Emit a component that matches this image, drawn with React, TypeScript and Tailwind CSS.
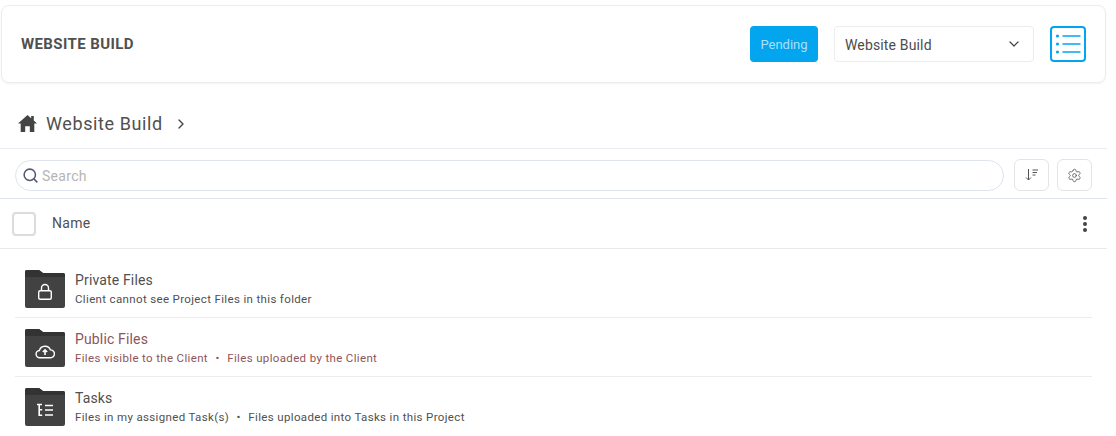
import { ChevronDown, ChevronRight, Search, Settings } from 'lucide-react';

function FolderIcon({ children }: { children: React.ReactNode }) {
  return (
    <div className="relative w-10 h-[38px] shrink-0 mt-[1px]">
      <svg width="40" height="38" viewBox="0 0 40 38" className="absolute inset-0">
        <path d="M2 0h12l4 3h20a2 2 0 0 1 2 2v31a2 2 0 0 1-2 2H2a2 2 0 0 1-2-2V2a2 2 0 0 1 2-2z" fill="#424242" />
        <path d="M0 2a2 2 0 0 1 2-2h12l4 3h20a2 2 0 0 1 2 2v2H0z" fill="#333333" />
      </svg>
      <div className="absolute inset-0 top-[7px] flex items-center justify-center">{children}</div>
    </div>
  );
}

const rows = [
  {
    title: 'Private Files',
    subs: ['Client cannot see Project Files in this folder'],
    accent: false,
    icon: (
      <svg width="16" height="18" viewBox="0 0 16 18" fill="none" stroke="#fff" strokeWidth="1.4">
        <rect x="1.7" y="7.7" width="12.6" height="8.6" rx="1.5" />
        <path d="M4.500 7.500V5a3.500 3.500 0 0 1 7 0v2.500" />
      </svg>
    ),
  },
  {
    title: 'Public Files',
    subs: ['Files visible to the Client', 'Files uploaded by the Client'],
    accent: true,
    icon: (
      <svg width="20" height="15" viewBox="0 0 20 15" fill="none" stroke="#fff" strokeWidth="1.4">
        <path d="M5 13.700a3.600 3.600 0 0 1-.6-7.200 5.800 5.800 0 0 1 11-.6 3.900 3.900 0 0 1 .3 7.800z" />
        <path d="M10 11V6M7.800 8l2.200-2.200L12.200 8" strokeWidth="1.6" />
      </svg>
    ),
  },
  {
    title: 'Tasks',
    subs: ['Files in my assigned Task(s)', 'Files uploaded into Tasks in this Project'],
    accent: false,
    icon: (
      <svg width="16" height="14" viewBox="0 0 16 14" fill="none" stroke="#fff" strokeWidth="1.6">
        <path d="M0 1.500h5M2.200 1.500v10.700h3M2.200 6.800h3M8 2.500h8M8 7h8M8 12h8" />
      </svg>
    ),
  },
];

export default function App() {
  return (
    <div className="w-[1116px] h-[436px] overflow-hidden bg-white text-[#505050] font-['Roboto',sans-serif]">
      <div className="w-[1107px]">
        <div className="pt-[5px] pl-[1px]">
          <div className="h-[78px] w-[1105px] border border-[#ececec] rounded-lg shadow-[0_1px_2px_rgba(0,0,0,0.05)] flex items-center pl-[19px] pr-[19px]">
            <h1 className="text-[15px] font-bold tracking-[0.4px] text-[#505050]">WEBSITE BUILD</h1>
            <div className="ml-auto flex items-center">
              <button className="w-[68px] h-[36px] rounded bg-[#03a5ef] text-[#a9e0fb] text-[13px] pt-[1px]">Pending</button>
              <div className="ml-4 w-[200px] h-[36px] border border-[#ececec] rounded flex items-center justify-between pl-[10px] pr-[11px]">
                <span className="text-[14px] tracking-[0.15px] pt-[3px] text-[#4c4c4c]">Website Build</span>
                <ChevronDown size={16} strokeWidth={1.8} className="text-[#444]" />
              </div>
              <div className="ml-4 w-[36px] h-[36px] border-2 border-[#03a5ef] rounded flex items-center justify-center">
                <svg width="26" height="20" viewBox="0 0 26 20">
                  <circle cx="2.500" cy="2" r="1.600" fill="#03a5ef" />
                  <circle cx="2.500" cy="10" r="1.600" fill="#03a5ef" />
                  <circle cx="2.500" cy="18" r="1.600" fill="#03a5ef" />
                  <path d="M7.500 2h18M7.500 10h18M7.500 18h18" stroke="#03a5ef" strokeWidth="1.500" />
                </svg>
              </div>
            </div>
          </div>
        </div>

        <div className="h-[66px] border-b border-[#e8ebf0] flex items-center pl-[18px] pt-[16px]">
          <svg width="19" height="17" viewBox="0 0 19 17" fill="#444">
            <path d="M9.500 0 0 8.500h2.700V17h4.500v-5.800h4.600V17h4.500V8.500H19l-3.200-2.900V1h-2.600v2.200z" />
          </svg>
          <span className="ml-[9px] text-[18px] tracking-[0.6px] text-[#505050]">Website Build</span>
          <ChevronRight size={16} strokeWidth={2} className="ml-[10px] text-[#444]" />
        </div>

        <div className="h-[50px] border-b border-[#e0e4ec] flex items-start pl-[15px] pr-[15px]">
          <div className="mt-[11px] h-[31px] w-[989px] border border-[#dfe3ee] rounded-full flex items-center pl-[6px]">
            <Search size={17} strokeWidth={2.200} className="text-[#555577]" />
            <span className="ml-[3px] pt-[2px] text-[14px] tracking-[0.3px] text-[#b5b5b5]">Search</span>
          </div>
          <div className="mt-[10px] ml-[10px] w-[35px] h-[32px] border border-[#e4e4e4] rounded-md flex items-center justify-center">
            <svg width="14" height="14" viewBox="0 0 14 14" fill="none" stroke="#555" strokeWidth="1">
              <path d="M3.500 1v11M1 9.500 3.500 12 6 9.500M7.500 2H13M7.500 4.500H12M7.500 7H10.500" />
            </svg>
          </div>
          <div className="mt-[10px] ml-[8px] w-[35px] h-[32px] border border-[#e4e4e4] rounded-md flex items-center justify-center">
            <Settings size={15} strokeWidth={1.300} className="text-[#555]" />
          </div>
        </div>

        <div className="h-[50px] border-b border-[#e8e8e8] flex items-center pl-[12px] pr-[19px]">
          <div className="w-6 h-6 border-2 border-[#dcdcdc] rounded" />
          <span className="ml-4 text-[14px] tracking-[0.3px] text-[#505050]">Name</span>
          <svg width="6" height="18" viewBox="0 0 6 18" fill="#444" className="ml-auto">
            <circle cx="3" cy="3" r="2" />
            <circle cx="3" cy="9" r="2" />
            <circle cx="3" cy="15" r="2" />
          </svg>
        </div>

        <div className="ml-[15px] w-[1077px] pt-[10px]">
          {rows.map((row) => (
            <div key={row.title} className="h-[59px] border-b border-[#ececec] last:border-b-transparent flex items-center pl-[10px]">
              <FolderIcon>{row.icon}</FolderIcon>
              <div className={`ml-[10px] pt-[3px] ${row.accent ? 'text-[#8d5558]' : 'text-[#505050]'}`}>
                <div className="text-[14px] leading-[19px] tracking-[0.15px]">{row.title}</div>
                <div className="text-[11.500px] leading-[18px] tracking-[0.35px] flex">
                  {row.subs.map((sub, i) => (
                    <span key={sub}>
                      {i > 0 && <span className="mx-[7.500px]">•</span>}
                      {sub}
                    </span>
                  ))}
                </div>
              </div>
            </div>
          ))}
        </div>
      </div>
    </div>
  );
}
